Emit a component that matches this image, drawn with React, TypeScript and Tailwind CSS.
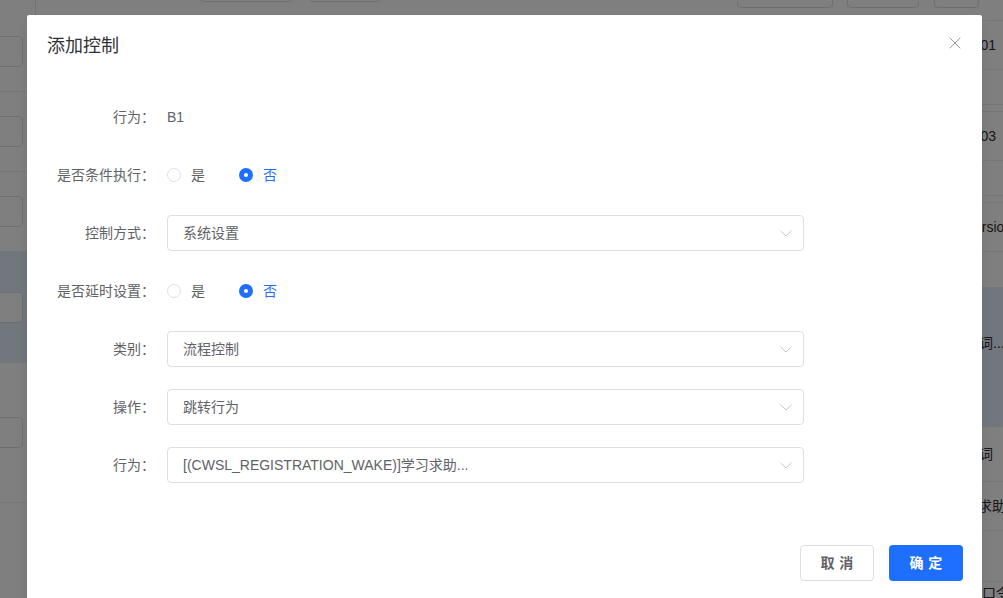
import { X } from "lucide-react";

type BgRow = {
  h: string;
  text?: string;
  pad?: string;
  tint?: boolean;
  line?: boolean;
};

// right strip of the page table, peeking out behind the dialog
const rightRows: BgRow[] = [
  { h: "h-[21px]", line: true },
  { h: "h-[49px]", text: "2301", pad: "pl-[25px]", line: true },
  { h: "h-[35px]", line: true },
  { h: "h-[7px]", line: true },
  { h: "h-[49px]", text: "2303", pad: "pl-[25px]", line: true },
  { h: "h-[35px]", line: true },
  { h: "h-[7px]", line: true },
  { h: "h-[49px]", text: "version", pad: "pl-[27px]", line: true },
  { h: "h-[35px]" },
  { h: "h-[140px] items-start pt-[46px]", text: "提问词...", pad: "pl-[11px]", tint: true },
  { h: "h-[55px]", text: "提问词", pad: "pl-[11px]", line: true },
  { h: "h-[49px]", text: "学习求助", pad: "pl-[10px]", line: true },
  { h: "h-[51px]", line: true },
  { h: "h-[30px] items-start pt-[1px]", text: "口令", pad: "pl-[42px]" },
];

// left panel rows, each holding an input box cut off by the window edge
const leftRows: BgRow[] = [
  { h: "h-[12px]" },
  { h: "h-[80px]", line: true },
  { h: "h-[80px]", line: true },
  { h: "h-[79px]" },
  { h: "h-[112px]", tint: true },
  { h: "h-[140px]", line: true },
  { h: "h-[95px]" },
];

function Background() {
  return (
    <div className="flex h-full w-full bg-white text-[14px] text-[#303133]">
      <div className="flex w-[36px] shrink-0 flex-col border-r border-[#e4e7ed]">
        {leftRows.map((row, i) => (
          <div
            key={i}
            className={`${row.h} flex shrink-0 items-center ${row.tint ? "bg-[#e4ecfb]" : ""} ${row.line ? "border-b border-[#ebeef5]" : ""}`}
          >
            {i > 0 && i < 6 && (
              <div className="-ml-[20px] h-[31px] w-[43px] rounded border border-[#dcdfe6] bg-white" />
            )}
          </div>
        ))}
      </div>

      <div className="min-w-0 flex-1 overflow-hidden">
        <div className="flex h-[15px] items-start">
          <div className="ml-[164px] -mt-[28px] h-[30px] w-[93px] shrink-0 rounded border border-[#dcdfe6]" />
          <div className="ml-[16px] -mt-[28px] h-[30px] w-[72px] shrink-0 rounded border border-[#dcdfe6]" />
          <div className="ml-[356px] -mt-[22px] h-[30px] w-[96px] shrink-0 rounded border border-[#dcdfe6]" />
          <div className="ml-[14px] -mt-[22px] h-[30px] w-[72px] shrink-0 rounded border border-[#dcdfe6]" />
        </div>
      </div>

      <div className="-mr-[60px] flex w-[123px] shrink-0 flex-col">
        <div className="absolute right-[24px] top-[-22px] h-[30px] w-[45px] rounded border border-[#dcdfe6]" />
        {rightRows.map((row, i) => (
          <div
            key={i}
            className={`${row.h} ${row.pad ?? ""} flex shrink-0 items-center whitespace-nowrap ${row.tint ? "bg-[#e4ecfb]" : ""} ${row.line ? "border-b border-[#ebeef5]" : ""}`}
          >
            {row.text}
          </div>
        ))}
      </div>
    </div>
  );
}

function Radio({ checked, label }: { checked?: boolean; label: string }) {
  return (
    <label className="flex items-center gap-[10px]">
      {checked ? (
        <span className="flex size-[14px] items-center justify-center rounded-full bg-[#1f6fff]">
          <span className="size-[4px] rounded-full bg-white" />
        </span>
      ) : (
        <span className="size-[14px] rounded-full border border-[#dcdfe6] bg-white" />
      )}
      <span className={checked ? "text-[#1f6fff]" : "text-[#606266]"}>{label}</span>
    </label>
  );
}

function Select({ value }: { value: string }) {
  return (
    <div className="flex h-[36px] w-[637px] items-center justify-between rounded border border-[#dcdfe6] bg-white pl-[15px] pr-[11px] text-[#606266]">
      <span className="truncate">{value}</span>
      <svg width="12" height="7" viewBox="0 0 12 7" fill="none" className="shrink-0">
        <path d="M0.5 0.8 L6 6 L11.5 0.8" stroke="#c0c4cc" strokeWidth="1" />
      </svg>
    </div>
  );
}

function Field({ label, children }: { label: string; children: React.ReactNode }) {
  return (
    <div className="flex h-[36px] items-center">
      <div className="w-[140px] shrink-0 pr-[12px] text-right text-[#606266]">{label}</div>
      {children}
    </div>
  );
}

export default function App() {
  return (
    <div
      className="relative h-[598px] w-[1003px] overflow-hidden text-[14px]"
      style={{ fontFamily: '"Liberation Sans", "Noto Sans CJK SC", sans-serif' }}
    >
      <Background />
      <div className="absolute inset-0 bg-black/50" />

      <div className="absolute left-[27px] top-[15px] h-[640px] w-[955px] rounded-[2px] bg-white shadow-lg">
        <div className="flex h-[64px] items-center px-[20px] pb-[2px]">
          <h2 className="text-[18px] leading-6 text-[#303133]">添加控制</h2>
          <button className="absolute right-[17px] top-[18px] text-[#909399]">
            <X className="size-[20px]" strokeWidth={1.1} />
          </button>
        </div>

        <div className="flex flex-col gap-[22px] pt-[20px]">
          <Field label="行为：">
            <span className="text-[#606266]">B1</span>
          </Field>
          <Field label="是否条件执行：">
            <div className="flex items-center gap-[34px]">
              <Radio label="是" />
              <Radio label="否" checked />
            </div>
          </Field>
          <Field label="控制方式：">
            <Select value="系统设置" />
          </Field>
          <Field label="是否延时设置：">
            <div className="flex items-center gap-[34px]">
              <Radio label="是" />
              <Radio label="否" checked />
            </div>
          </Field>
          <Field label="类别：">
            <Select value="流程控制" />
          </Field>
          <Field label="操作：">
            <Select value="跳转行为" />
          </Field>
          <Field label="行为：">
            <Select value="[(CWSL_REGISTRATION_WAKE)]学习求助..." />
          </Field>
        </div>

        <div className="flex justify-end gap-[15px] px-[19px] pt-[62px]">
          <button className="h-[36px] w-[74px] rounded border border-[#dcdfe6] bg-white font-semibold text-[#606266]">
            <span className="mr-[-0.34em] tracking-[0.34em]">取消</span>
          </button>
          <button className="h-[36px] w-[74px] rounded bg-[#1f6fff] font-semibold text-white">
            <span className="mr-[-0.34em] tracking-[0.34em]">确定</span>
          </button>
        </div>
      </div>
    </div>
  );
}
